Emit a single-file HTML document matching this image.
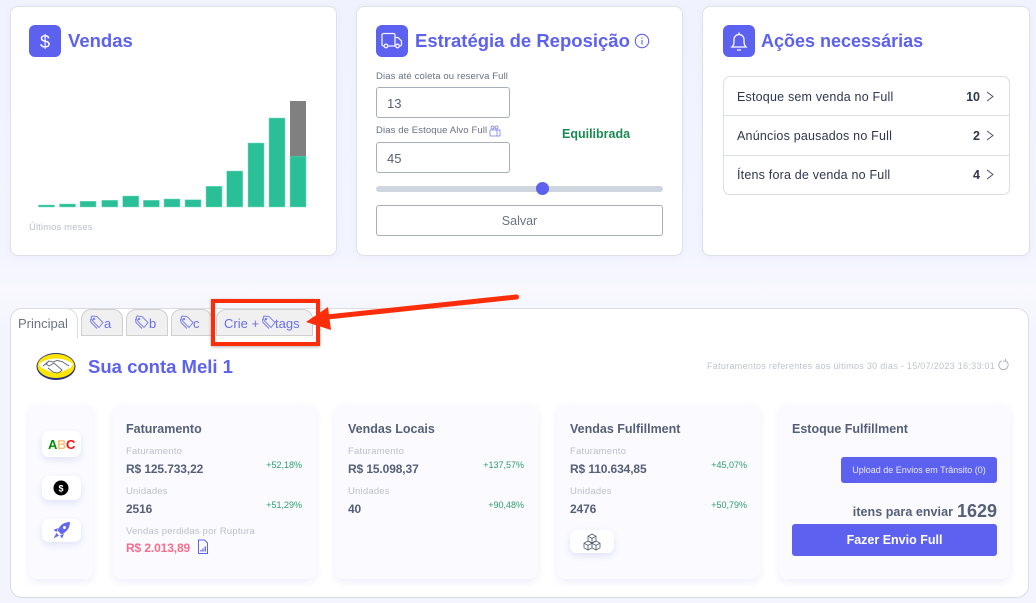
<!DOCTYPE html>
<html lang="pt"><head><meta charset="utf-8"><title>Painel</title>
<style>
html,body{margin:0;padding:0}
body{width:1036px;height:603px;position:relative;overflow:hidden;background:linear-gradient(#f0f2fd 0,#f2f4fe 250px,#f8f8fe 290px,#f3f4fe 330px);font-family:"Liberation Sans",sans-serif}
.a,.t{position:absolute}
.t{white-space:nowrap;line-height:1}
.card{position:absolute;top:6px;height:248px;background:#fff;border:1px solid #dfe1ea;border-radius:8px;box-sizing:content-box;box-shadow:0 2px 8px rgba(90,90,200,.05)}
.ic{position:absolute;width:32px;height:32px;top:25px;background:#5d61ef;border-radius:6px}
.h{font-size:18.5px;font-weight:700;color:#5d61ef}
.lb{font-size:9.5px;color:#697083;letter-spacing:.12px}
.inp{position:absolute;box-sizing:border-box;left:376px;width:134px;height:31px;border:1px solid #a9aebd;border-radius:3px;font-size:13px;color:#5a6175;padding:9px 0 0 10px;line-height:1;background:#fff}
.row{font-size:12.5px;color:#2e374f;letter-spacing:.2px}
.rn{font-size:12.5px;font-weight:700;color:#2e374f;text-align:right}
.sub{position:absolute;top:405px;height:174px;background:#fafaff;border-radius:8px;box-shadow:0 3px 8px rgba(90,90,220,.1)}
.st{font-size:12.5px;font-weight:700;color:#565f78}
.sl{font-size:9.5px;color:#bcbfcc;letter-spacing:.2px}
.sv{font-size:12px;font-weight:700;color:#565f78;letter-spacing:-.12px}
.sp{font-size:9px;color:#2f9e69}
.wb{position:absolute;background:#fff;border-radius:7px;box-shadow:0 3px 7px rgba(90,90,220,.14)}
.tab{position:absolute;top:309px;height:27px;background:#f0f0f0;border:1px solid #cfcfcf;border-radius:10px 10px 0 0;box-sizing:border-box}
.tx{font-size:13px;color:#6a6ee8;top:317px}
</style></head>
<body>

<!-- Card 1 -->
<div class="card" style="left:10px;width:325px"></div>
<div class="ic" style="left:29px"></div>
<div class="t" style="left:29px;top:33px;width:32px;text-align:center;color:#fff;font-size:18px">$</div>
<div class="t h" style="left:68px;top:32px">Vendas</div>
<svg class="a" style="left:0;top:0" width="340" height="220">
<g fill="#2bbf98" stroke="#7fdcc4" stroke-width=".5">
<rect x="38.5" y="205" width="16" height="2"/>
<rect x="59.5" y="204" width="16" height="3"/>
<rect x="80" y="201.3" width="16" height="5.7"/>
<rect x="101.7" y="200.3" width="16" height="6.7"/>
<rect x="122.7" y="196" width="16" height="11"/>
<rect x="143.4" y="200.3" width="16" height="6.7"/>
<rect x="164" y="199" width="16" height="8"/>
<rect x="185" y="199.7" width="16" height="7.3"/>
<rect x="206" y="186.3" width="16" height="20.7"/>
<rect x="226.7" y="171" width="16" height="36"/>
<rect x="248" y="143" width="16" height="64"/>
<rect x="269" y="118" width="16" height="89"/>
<rect x="290" y="156" width="16" height="51"/>
</g>
<rect x="290" y="101" width="16" height="55" fill="#808080"/>
</svg>
<div class="t" style="left:29px;top:223px;font-size:9.5px;color:#bcc0cc;letter-spacing:.1px">Últimos meses</div>

<!-- Card 2 -->
<div class="card" style="left:356px;width:325px"></div>
<div class="ic" style="left:376px"></div>
<svg class="a" style="left:376px;top:25px" width="32" height="32" fill="none" stroke="#fff" stroke-width="1.3" opacity=".92">
<path d="M8 21H7.500A1.500 1.500 0 0 1 6 19.500V10A1.500 1.500 0 0 1 7.500 8.500H17.500A1.500 1.500 0 0 1 19 10V21H12"/>
<path d="M19 12.500h3L25.500 16V19.500A1.500 1.500 0 0 1 24 21H23.500M19 21h.5"/>
<circle cx="10" cy="21" r="1.800"/><circle cx="21.500" cy="21" r="1.800"/>
</svg>
<div class="t h" style="left:415px;top:32px">Estratégia de Reposição</div>
<svg class="a" style="left:634px;top:33px" width="16" height="16" fill="none" stroke="#5d61ef" stroke-width="1.100"><circle cx="8" cy="8" r="6.700"/><path d="M8 7v4.500M8 4.500v1.200"/></svg>
<div class="t lb" style="left:376px;top:72px">Dias até coleta ou reserva Full</div>
<div class="inp" style="top:87px">13</div>
<div class="t lb" style="left:376px;top:126px">Dias de Estoque Alvo Full</div>
<svg class="a" style="left:489px;top:125px" width="12" height="12" fill="none" stroke="#7d80ee" stroke-width=".8"><rect x="1" y="5" width="10" height="6"/><circle cx="3.500" cy="2.500" r="1.500"/><circle cx="7.500" cy="2.500" r="1.500"/><path d="M8 5v6"/></svg>
<div class="inp" style="top:142px">45</div>
<div class="t" style="left:562px;top:128px;font-size:12.5px;font-weight:700;color:#1c8a55">Equilibrada</div>
<div class="a" style="left:376px;top:186px;width:287px;height:6px;background:#cfd6df;border-radius:3px"></div>
<div class="a" style="left:536px;top:182px;width:13px;height:13px;background:#5d61ef;border-radius:50%"></div>
<div class="a" style="left:376px;top:205px;width:287px;height:31px;box-sizing:border-box;border:1px solid #a9aebd;border-radius:3px;text-align:center;font-size:12.5px;color:#6b7285;line-height:30px">Salvar</div>

<!-- Card 3 -->
<div class="card" style="left:702px;width:326px"></div>
<div class="ic" style="left:723px"></div>
<svg class="a" style="left:723px;top:25px" width="32" height="32" fill="none" stroke="#fff" stroke-width="1.300">
<path d="M9 22c1.500-1.500 2-3 2-5.500v-2a5 5 0 0 1 10 0v2c0 2.500.500 4 2 5.500z"/><path d="M14 25h4M16 7.500v1.500"/>
</svg>
<div class="t h" style="left:761px;top:32px;font-size:18px">Ações necessárias</div>
<div class="a" style="left:723px;top:76px;width:287px;height:119px;box-sizing:border-box;border:1px solid #dcdee6;border-radius:7px"></div>
<div class="a" style="left:724px;top:115px;width:285px;height:1px;background:#dcdee6"></div>
<div class="a" style="left:724px;top:155px;width:285px;height:1px;background:#dcdee6"></div>
<div class="t row" style="left:737px;top:91px">Estoque sem venda no Full</div>
<div class="t row" style="left:737px;top:130px">Anúncios pausados no Full</div>
<div class="t row" style="left:737px;top:169px">Ítens fora de venda no Full</div>
<div class="t rn" style="left:950px;width:30px;top:91px">10</div>
<div class="t rn" style="left:950px;width:30px;top:130px">2</div>
<div class="t rn" style="left:950px;width:30px;top:169px">4</div>
<svg class="a" style="left:985px;top:90px" width="12" height="94" fill="none" stroke="#444b60" stroke-width=".9">
<path d="M2 2l6 4.500-6 4.500M2 41l6 4.500-6 4.500M2 80l6 4.500-6 4.500"/></svg>

<!-- Panel -->
<div class="a" style="left:10px;top:308px;width:1019px;height:290px;box-sizing:border-box;background:#fff;border:1px solid #dcdde3;border-radius:12px"></div>

<div class="a" style="left:10px;top:308px;width:68px;height:30px;box-sizing:border-box;background:#fff;border:1px solid #dcdde3;border-bottom:0;border-radius:12px 12px 0 0"></div>
<div class="t" style="left:18px;top:317px;font-size:13px;color:#6b7285">Principal</div>
<div class="tab" style="left:81px;width:42px"></div>
<div class="tab" style="left:126px;width:42px"></div>
<div class="tab" style="left:171px;width:41px"></div>
<div class="tab" style="left:216px;width:97px"></div>
<svg class="a" style="left:0;top:300px" width="300" height="40" fill="none" stroke="#7377ea" stroke-width=".9">
<path d="M91 18l1-2 5 .5 6 6-4 5-6-6z"/><path d="M90.500 19l.5 3.500 6 6"/><circle cx="94" cy="19" r=".8"/>
<path d="M136 18l1-2 5 .5 6 6-4 5-6-6z"/><path d="M135.500 19l.5 3.500 6 6"/><circle cx="139" cy="19" r=".8"/>
<path d="M181 18l1-2 5 .5 6 6-4 5-6-6z"/><path d="M180.500 19l.5 3.500 6 6"/><circle cx="184" cy="19" r=".8"/>
<path d="M263 18l1-2 5 .5 6 6-4 5-6-6z"/><path d="M262.500 19l.5 3.500 6 6"/><circle cx="266" cy="19" r=".8"/>
</svg>
<div class="t tx" style="left:104px">a</div>
<div class="t tx" style="left:149px">b</div>
<div class="t tx" style="left:193px">c</div>
<div class="t tx" style="left:224px">Crie +</div>
<div class="t tx" style="left:275px">tags</div>

<!-- Red annotation -->
<div class="a" style="left:211px;top:299px;width:109px;height:47px;box-sizing:border-box;border:4px solid #fb2d0a;box-shadow:0 1px 3px rgba(0,0,0,.3)"></div>
<svg class="a" style="left:300px;top:290px" width="225" height="50">
<path d="M216.500 7L27 27" stroke="#fb2d0a" stroke-width="5" stroke-linecap="round"/>
<path d="M6 32L28 17L31 40Z" fill="#fb2d0a"/>
</svg>

<!-- Meli -->
<svg class="a" style="left:35px;top:352px" width="41" height="29">
<ellipse cx="21" cy="14.500" rx="19.500" ry="13.500" fill="#2d3277"/>
<ellipse cx="21" cy="14" rx="18.500" ry="12" fill="#ffe600"/>
<path d="M4 12C9 8 15 6.500 21 6.500S33 8 38 12c-1 3-3 4.500-6.500 5.500-3 2-6.500 3-10.500 3s-7.500-1-10.500-3C7 16.500 5 15 4 12z" fill="#fff"/>
<path d="M8 14l6-5 4 1 4-1.500 5 1 7 4.500M14 9l-3 3 3 2 5-3 8 7-2 2-3 1-4-1-5-4" fill="none" stroke="#5a5f72" stroke-width=".9"/>
</svg>
<div class="t h" style="left:88px;top:358px">Sua conta Meli 1</div>
<div class="t" style="left:707px;top:362px;font-size:9px;color:#c0c3ce;letter-spacing:.3px">Faturamentos referentes aos últimos 30 dias - 15/07/2023 16:33:01</div>
<svg class="a" style="left:997px;top:358px" width="13" height="13" fill="none" stroke="#a9adb9" stroke-width=".9"><circle cx="6.500" cy="7" r="4.700" stroke-dasharray="25 5" transform="rotate(-60 6.500 7)"/><path d="M8.500 .8v2.400H6"/></svg>

<!-- Sub cards -->
<div class="sub" style="left:29px;width:64px"></div>
<div class="wb" style="left:42px;top:431px;width:39px;height:26px"></div>
<div class="t" style="left:42px;top:438px;width:39px;text-align:center;font-size:13px;font-weight:700;letter-spacing:-.4px"><span style="color:#0a8a0a">A</span><span style="color:#fdc27c">B</span><span style="color:#fb1010">C</span></div>
<div class="wb" style="left:42px;top:476px;width:39px;height:24px"></div>
<svg class="a" style="left:53px;top:480px" width="16" height="16"><circle cx="8" cy="8" r="7.500" fill="#000"/><text x="8" y="11.300" font-size="9" font-weight="700" fill="#fff" text-anchor="middle" font-family="Liberation Sans">$</text></svg>
<div class="wb" style="left:42px;top:519px;width:39px;height:23px"></div>
<svg class="a" style="left:52px;top:521px" width="19" height="19" fill="#6468ee"><path d="M18 1c-5.500 0-9 2.500-11.500 6.500L5.500 9.500l4 4 2-1c3.500-2.500 6.500-6 6.500-11.500zM6 7L1.500 9l3 2zM12 13l-2 4.500-2-3zM4.500 12l-3 5.500 5.500-3z"/><circle cx="12.500" cy="6.500" r="1.500" fill="#fff"/></svg>

<div class="sub" style="left:113px;width:203px"></div>
<div class="t st" style="left:126px;top:423px">Faturamento</div>
<div class="t sl" style="left:126px;top:447px">Faturamento</div>
<div class="t sv" style="left:126px;top:463px">R$ 125.733,22</div>
<div class="t sp" style="right:734px;top:461px">+52,18%</div>
<div class="t sl" style="left:126px;top:487px">Unidades</div>
<div class="t sv" style="left:126px;top:503px">2516</div>
<div class="t sp" style="right:734px;top:501px">+51,29%</div>
<div class="t sl" style="left:126px;top:527px">Vendas perdidas por Ruptura</div>
<div class="t sv" style="left:126px;top:542px;color:#fb6c8b">R$ 2.013,89</div>
<svg class="a" style="left:197px;top:539px" width="12" height="16" fill="none" stroke="#5d61ef" stroke-width="1"><path d="M1.500 1h6l3 3v10.500h-9z"/><path d="M4 12.500v-1.500M6 12.500v-3M8.300 12.500v-5" stroke-width="1.300"/></svg>

<div class="sub" style="left:335px;width:203px"></div>
<div class="t st" style="left:348px;top:423px">Vendas Locais</div>
<div class="t sl" style="left:348px;top:447px">Faturamento</div>
<div class="t sv" style="left:348px;top:463px">R$ 15.098,37</div>
<div class="t sp" style="right:512px;top:461px">+137,57%</div>
<div class="t sl" style="left:348px;top:487px">Unidades</div>
<div class="t sv" style="left:348px;top:503px">40</div>
<div class="t sp" style="right:512px;top:501px">+90,48%</div>

<div class="sub" style="left:557px;width:203px"></div>
<div class="t st" style="left:570px;top:423px">Vendas Fulfillment</div>
<div class="t sl" style="left:570px;top:447px">Faturamento</div>
<div class="t sv" style="left:570px;top:463px">R$ 110.634,85</div>
<div class="t sp" style="right:289px;top:461px">+45,07%</div>
<div class="t sl" style="left:570px;top:487px">Unidades</div>
<div class="t sv" style="left:570px;top:503px">2476</div>
<div class="t sp" style="right:289px;top:501px">+50,79%</div>
<div class="wb" style="left:570px;top:530px;width:44px;height:23px"></div>
<svg class="a" style="left:583px;top:533px" width="18" height="18" fill="none" stroke="#4e5670" stroke-width=".8"><path d="M9 1l4 2.200v4.600L9 10 5 7.800V3.200zM5 3.200l4 2.200 4-2.200M9 5.400V10"/><path d="M5 8l4 2.200v4.600L5 17l-4-2.200v-4.600zM1 10.200l4 2.200 4-2.200M5 12.400V17"/><path d="M13 8l4 2.200v4.600L13 17l-4-2.200v-4.600zM9 10.200l4 2.200 4-2.200M13 12.400V17"/></svg>

<div class="sub" style="left:779px;width:231px"></div>
<div class="t st" style="left:792px;top:423px">Estoque Fulfillment</div>
<div class="a" style="left:841px;top:457px;width:156px;height:26px;background:#5d61ef;border-radius:3px;color:#e8e9ff;font-size:9px;line-height:26px;text-align:center">Upload de Envios em Trânsito (0)</div>
<div class="t" style="right:39px;top:502px;font-size:18px;font-weight:700;color:#565f78">1629</div>
<div class="t" style="right:83px;top:506px;font-size:12.500px;font-weight:700;color:#565f78;letter-spacing:.05px">itens para enviar</div>
<div class="a" style="left:792px;top:524px;width:205px;height:32px;background:#5d61ef;border-radius:3px;color:#fff;font-size:12.500px;font-weight:700;line-height:33px;text-align:center">Fazer Envio Full</div>
</body></html>
